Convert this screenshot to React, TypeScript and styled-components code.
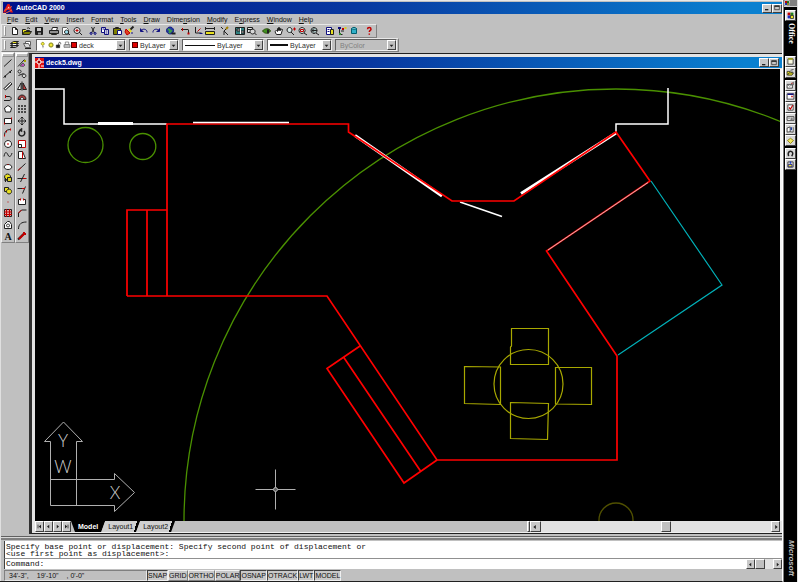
import React from "react";
import styled, { createGlobalStyle, css } from "styled-components";

const GlobalStyle = createGlobalStyle`
  * { box-sizing: border-box; }
  body { margin: 0; background: #c0c0c0; }
  button, select, input, textarea { font: inherit; color: inherit; margin: 0; border-radius: 0; }
`;

const raised = css`
  border: 1px solid;
  border-color: #fff #404040 #404040 #fff;
`;

/* ---------- icons ---------- */

type Mark = [d: string, stroke?: string, fill?: string, width?: number];

const K = "#202020";
const G = "#606060";
const R = "#c00000";
const Y = "#e8e020";
const B = "#101080";
const W = "#ffffff";

const icons: Record<string, Mark[]> = {
  file: [["M3.5 2.5h3l2 2v5h-5z", K, W], ["M6.5 2.5v2h2", K]],
  open: [["M1.5 9.5v-5h3l1 1h3v1", K, Y], ["M1.5 9.5l2-3h7l-2 3z", K, "#808000"], ["M6 3.5c1-1 2-1 3 .5", K]],
  save: [["M2.5 2.5h7v7h-7z", K, K], ["M4 3h4v3H4z", "none", "#c8c8c8"], ["M5 7.5h3v2H5z", "none", "#a0a0a0"]],
  print: [["M4.5 2.5h5l-1 3h-5z", K, W], ["M1.5 5.5h9v3h-9z", K, "#909090"], ["M3.5 8.5h5v1h-5z", K, Y]],
  preview: [["M2.5 2.5h4l2 2v5h-6z", G, W], ["M6.5 5a2 2 0 1 0 .1 0M8 8l2 2", K, "#a0e0f0"]],
  find: [["M5 2.5a3 3 0 1 0 .1 0M7 7l3 3", K, "#e8e8e8"], ["M3.5 5.5h3M5 4v3", R]],
  cut: [["M4.5 2l3 6M7.5 2l-3 6", K], ["M4 7.5a1 1 0 1 0 .1 0M8 7.5a1 1 0 1 0 .1 0", B]],
  copy: [["M2.5 2.5h4v5h-4z", B, W], ["M5.5 4.5h4v5h-4z", B, W], ["M3.5 4h2M6.5 6h2M6.5 8h2", B]],
  paste: [["M2.5 3.5h7v6h-7z", K, "#808000"], ["M4.5 2.5h3v1h-3z", K, Y], ["M6.5 5.5h4v4h-4z", B, W]],
  match: [["M10.5 1.5l-4 4", K, "none", 2], ["M3 4l4 4-3 2-2-3z", R, "#e04020"], ["M6 4l2 3", Y, "none", 2], ["M8 8h2", B]],
  undo: [["M2.500 6c2-3 7-2 6.500 1.500", B], ["M2.500 3.500v3h3", B, B]],
  redo: [["M9.500 6c-2-3-7-2-6.500 1.500", B], ["M9.500 3.500v3h-3", B, B]],
  globe: [["M5 2a3.500 3.500 0 1 0 .1 0", B, "#2040a0"], ["M3 4l3 2-2 2", "#40a040", "none", 2], ["M6.500 8.500h4", K, "none", 2]],
  track: [["M1 4.500h7M8.500 4.500v4", K], ["M7.500 8.500h2", R, R, 2], ["M2.500 3v3", R]],
  ucs: [["M3.500 2v6h6", K], ["M5.500 6.500l3-3", R], ["M7.500 8.500h3", B]],
  dist: [["M1.500 6.500h9v3h-9z", K, Y], ["M1.500 3.500h9M1.500 2v3M10.500 2v3", K]],
  redraw: [["M2 2l2 2M9 2l-4 4v4M5 6l4 4", K], ["M7 4l2-2", "#a08000", "none", 2]],
  aerial: [["M1.500 2.500h9v7h-9z", K, "#308080"], ["M3 4h3v2H3zM7 6h3v2H7z", K, "#d0d0d0"], ["M6.500 3v6", W]],
  views: [["M1.500 2.500h5v5h-5z", K, "#e8e8e8"], ["M6.500 4a2.500 2.500 0 1 0 .1 0M8.500 8l2 2", K, "#d8d8d8"], ["M1.500 4.500h5", K]],
  orbit: [["M1.500 6c2-3 7-3 8 0-2 3-6 3-8 0z", "#305010", "#409020"], ["M7 4.500v4", K, "none", 2]],
  pan: [["M3.500 9.500c-3-4 0-5 1-3V3.500h1v2-3h1v3-2h1v2l1-1.500 1 .500-1.500 5z", K, W]],
  zoomrt: [["M4.500 2.500a2.500 2.500 0 1 0 .1 0M6 7l3 3", K, "#d8e8e8"], ["M8 4h3M9.500 2.500v3", R]],
  zoomwin: [["M5 2.500a3 3 0 1 0 .1 0M7 8l3 2", K, "#d8e8e8"], ["M3.500 4.500h3v2h-3z", R]],
  zoomprev: [["M5 2.500a3 3 0 1 0 .1 0M7 8l3 2", K, "#a8c0c0"], ["M3 5.500h5M5 3.500L3 5.500l2 2", K]],
  props: [["M2.500 2.500h5v7h-5z", B, W], ["M6.500 4.500h3v5h-3z", K, Y], ["M3.500 4.500h2M3.500 6.500h2", B]],
  design: [["M2 2h3v2H2z", "none", B], ["M6 3h2v2H6z", "none", R], ["M8.500 2h2v2h-2z", "none", "#d8d020"], ["M3.500 4v5.500h3M5 6h3", K], ["M3 8h2v2H3z", "none", "#309030"]],
  db: [["M3.500 3.500h5v5h-5z", "#006070", "#30b0c8"], ["M3.500 3.500c1-1.500 4-1.500 5 0-1 1-4 1-5 0", "#006070", "#90e0f0"]],
  help: [["M4.500 4.200c0-2.200 3.500-2.200 3.500 0 0 1.200-1.700 1.200-1.700 2.800M6.300 8.500v1.300", R, "none", 1.5]],
  layers: [["M1.500 4.500l3-2h5l-3 2z", K, Y], ["M1.500 6.500l3-2h5l-3 2z", K, W], ["M1.500 8.500l3-2h5l-3 2z", K, "#b0b0b0"]],
  layerset: [["M4.500 2.500h5v4h-5z", G, W], ["M2.500 4.500h5l2 4h-5z", G, "#d8d8d8"], ["M4 9.500h6", K]],
  bulb: [["M5.500 2a2.200 2.200 0 1 0 .1 0", "#707000", "#f8f040"], ["M5 8h2M5.500 10h1", K]],
  sun: [["M3.500 3.500h5v5h-5z", "#707000", "#f0e830"], ["M6 1.500v2M6 8.500v2M1.500 6h2M8.500 6h2", "#909000"]],
  unlock: [["M2 6h5v4H2z", K, K], ["M5.500 6V3.500c0-2 3-2 3 0V5", K]],
  plot: [["M3.500 1.500h5v4h-5z", G, W], ["M1.500 5.500h9v4h-9z", G, "#c8c8c8"]],
  line: [["M2 9.500L9.500 2.500", K]],
  xline: [["M1.500 9.500L10 2", K], ["M2.500 8.500h1.500M7.500 4h1.500", K, "none", 2]],
  mline: [["M2 8.500L8 2.500l2 1.500-6.500 6z", K, "#909090"], ["M3 9l6-6", W]],
  pline: [["M2 9.500h5c3 0 3-4 0-4H3", K], ["M3.500 4v3", R]],
  polygon: [["M6 2.500l3.500 2.500-1 4h-5l-1-4z", K, W]],
  rect: [["M2.500 3.500h7v5h-7z", K, W], ["M2 8.500h1M9 3.500h1", R, "none", 2]],
  arc: [["M2.500 9.500c0-4 2-6 6-6", K], ["M2 9.500h1M8 3.500h1M4 5.500h1", R, "none", 2]],
  circle: [["M6 2.500a3.500 3.500 0 1 0 .1 0", K, W], ["M5.500 6h1", R, "none", 2]],
  spline: [["M2 7.500c1-6 3-4 4-1.500s3 2 4-2", K]],
  ellipse: [["M6 3.500c5 0 5 5 0 5s-5-5 0-5", K, W], ["M5.500 3.500h1", R]],
  insert: [["M5.500 2a3 3 0 1 0 .1 0", K, Y], ["M5.500 5.500h4v4h-4z", K, "#d8d020"], ["M2 8h3M3.500 6v4", K]],
  block: [["M2.500 3.500h4v4h-4z", K, Y], ["M7 5a2.500 2.500 0 1 0 .1 0", K, Y]],
  point: [["M5.500 6h1", R, "none", 1]],
  hatch: [["M2.500 2.500h7v7h-7z", K, "#e8a0a0"], ["M2 5h8M2 7.500h8M4.500 2v8M7.500 2v8", R]],
  region: [["M2.500 9.500v-4l3-3h2l2 3v4z", K, W], ["M6 5a1.500 1.500 0 1 0 .1 0", K]],
  erase: [["M2 9.500L8.500 2.500", K], ["M4 9l3-3 2 2-1.500 1.500z", G, "#c050c0"], ["M8 4h2", "#a8a000", "none", 2]],
  copyobj: [["M3.500 2a1.500 1.500 0 1 0 .1 0M8 6a1.800 1.800 0 1 0 .1 0M2.500 7.500l5-2", K, "#d8d8d8"]],
  mirror: [["M5 3v6.500H1.500z", K, W], ["M7 3v6.500h3.500z", K, "#d04040"], ["M6 1.500v9", K]],
  offset: [["M2 8.500c0-6 8-6 8 0z", K, "#b04040"], ["M4.500 8.500c0-3 3-3 3 0", K, W]],
  array: [["M2.500 2.500h1v1h-1zM5.500 2.500h1v1h-1zM8.500 2.500h1v1h-1zM2.500 5.500h1v1h-1zM5.500 5.500h1v1h-1zM8.500 5.500h1v1h-1zM2.500 8.500h1v1h-1zM5.500 8.500h1v1h-1zM8.500 8.500h1v1h-1z", K]],
  move: [["M6 2v8M2 6h8M4.500 3.500L6 2l1.500 1.500M4.500 8.500L6 10l1.500-1.500M3.500 4.500L2 6l1.500 1.500M8.500 4.500L10 6 8.500 7.500", K]],
  rotate: [["M6 4a3 3 0 1 0 2 1", K, "none", 1.5], ["M6 2v4l-2.500-2z", K, K, 0.5]],
  scale: [["M2.500 2.500h7v7h-7z", R, W], ["M2.500 6.500h3v3h-3z", K]],
  stretch: [["M2.500 2.500h4l3 7h-7z", K, W], ["M6.500 2.500v7", R]],
  lengthen: [["M2 9.500L9.500 2.500", K], ["M2 9.500l3-3", R]],
  trim: [["M1.500 6.500h9M8.500 2l-4 8", K], ["M7 6.500h3", R]],
  extend: [["M1.500 4.500h6M9.500 2.500l-3 7", K], ["M6 4.500h3", R]],
  brk: [["M4.500 3.500h-2v5h7v-5h-2", K, W], ["M4 3.500h1M7 3.500h1", R, "none", 2]],
  chamfer: [["M2.500 10V6l3-3h5", K], ["M2.500 6l3-3", R]],
  fillet: [["M2.500 10c0-5 3-7 8-7", K]],
  explode: [["M2 9.500L7.500 4", K, "none", 2], ["M3 9l5-5M8 2v2h2", R, "none", 2]],
  shortcut: [["M1 1h10v10H1z", "none", W], ["M2 2h4v4H2z", "none", R], ["M6 2h4v4H6z", "none", "#208020"], ["M2 6h4v4H2z", "none", "#2030c0"], ["M6 6h4v4H6z", K, Y]],
  newdoc: [["M2.500 2.500h7v7h-7z", K, "#f8f8e0"], ["M3 2.500h6", "#a0a000", "none", 2]],
  opendoc: [["M1.500 9.500v-5h4l1 1h3", K, Y], ["M2 9.500l2-3h6l-2 3z", K, Y], ["M6 3l4-1", K]],
  mail: [["M1.500 4.500h7v5h-7z", K, W], ["M2 5l3 2 3-2M7 3.500l3-2v4", G], ["M7 3h2", R]],
  appt: [["M1.500 2.500h9v7h-9z", K, W], ["M2 3h8", B, "none", 2], ["M7 6h2", R, "none", 2]],
  task: [["M2.500 2.500h7v7h-7z", K, W], ["M4 6l2 2 3-5", R, "none", 1.5]],
  contact: [["M1.500 3.500h9v5h-9z", K, W], ["M3 5.500h2M6 5.500h3M6 7h3", K]],
  journal: [["M1.500 4l4-1.500V9l-4 .500zM5.500 9l4 .500V3", K, W], ["M7 3v4", "#2040a0", "none", 2]],
  note: [["M2 6l4-3 4 3-4 4z", "#807000", "#f0e860"]],
  horse: [["M3.500 9.500c-2-6 2-7 4-6s2 4 0 6", K, "none", 2]],
  explore: [["M2.500 2.500h7v7h-7z", K, "#e0e0e0"], ["M3 6h5v3H3z", B, Y], ["M6 2v3", "#2040d0", "none", 2]],
  left: [["M7 3.500v5L4 6z", "none", K]],
  right: [["M5 3.500v5L8 6z", "none", K]],
  first: [["M8 3.500v5L5 6z", "none", K], ["M4 3.500v5", K]],
  last: [["M4 3.500v5L7 6z", "none", K], ["M8 3.500v5", K]],
  down: [["M3.500 5h5L6 8z", "none", K]],
  min: [["M3 8.500h5", K, "none", 2]],
  max: [["M2.500 3.500h7v5h-7z", K], ["M2 3h8", K, "none", 2]],
};

const Svg = styled.svg`
  display: block;
  flex: none;
`;

const Icon = ({ name, size = 12 }: { name: string; size?: number }) => (
  <Svg width={size} height={size} viewBox="0 0 12 12" aria-hidden="true">
    {icons[name].map(([d, stroke = "none", fill = "none", width = 1], i) => (
      <path key={i} d={d} stroke={stroke} fill={fill} strokeWidth={width} />
    ))}
  </Svg>
);

/* ---------- window shell ---------- */

const Screen = styled.div`
  display: flex;
  height: 100vh;
  overflow: hidden;
  background: #000;
  font: 7px/10px "Liberation Sans", Arial, sans-serif;
  color: #101010;
`;

const AppWindow = styled.main`
  flex: 1;
  min-width: 0;
  display: flex;
  flex-direction: column;
  padding: 2px 0 0 1px;
  background: #c0c0c0;
  border-right: 1px solid #fff;
  border-bottom: 1px solid #202020;
  box-shadow: inset 0 1px #e8e8e8, inset 1px 0 #e0e0e0;
`;

const TitleBar = styled.header<{ $doc?: boolean }>`
  display: flex;
  align-items: center;
  gap: 2px;
  flex: none;
  height: ${(p) => (p.$doc ? 11 : 12)}px;
  margin-left: ${(p) => (p.$doc ? 0 : 2)}px;
  padding: 0 ${(p) => (p.$doc ? 3 : 0)}px 0 0;
  background: linear-gradient(90deg, #00108a, #0838a0 45%, #0a80d0 95%);
  color: #fff;
`;

const Title = styled.h1`
  flex: 1;
  margin: 0;
  font-size: 7px;
  font-weight: bold;
`;

const WindowButtons = styled.div`
  display: flex;
`;

const WindowButton = styled.button`
  ${raised}
  display: flex;
  align-items: center;
  justify-content: center;
  width: 10px;
  height: 9px;
  padding: 0;
  background: #c8c8c8;
`;

const MenuBar = styled.nav`
  display: flex;
  flex: none;
  height: 10px;
  padding-left: 3px;
`;

const MenuItem = styled.button`
  border: 0;
  padding: 0 4px 0 3px;
  background: none;
  line-height: 9px;
  white-space: nowrap;
`;

const ToolBar = styled.div`
  display: flex;
  align-items: center;
  align-self: flex-start;
  flex: none;
  gap: 3px;
  height: 14px;
  padding: 0 1px 0 2px;
  border: 1px solid;
  border-color: #e8e8e8 #808080 #808080 #e8e8e8;
`;

const Grip = styled.span<{ $flat?: boolean }>`
  flex: none;
  width: ${(p) => (p.$flat ? "auto" : "2px")};
  height: ${(p) => (p.$flat ? "4px" : "10px")};
  border: 1px solid;
  border-color: #fff #909090 #909090 #fff;
`;

const ToolGroup = styled.div`
  display: flex;
`;

const ToolButton = styled.button`
  display: flex;
  align-items: center;
  justify-content: center;
  width: 12px;
  min-height: 0;
  padding: 0;
  border: 0;
  background: none;
`;

const Combo = styled.label<{ $width: number; $disabled?: boolean }>`
  display: flex;
  align-items: center;
  width: ${(p) => p.$width}px;
  height: 12px;
  padding-left: 2px;
  border: 1px solid;
  border-color: #606060 #f0f0f0 #f0f0f0 #606060;
  background: ${(p) => (p.$disabled ? "#c0c0c0" : "#fff")};
  color: ${(p) => (p.$disabled ? "#808080" : "#303030")};
`;

const ComboSelect = styled.select`
  flex: 1;
  min-width: 0;
  appearance: none;
  padding: 0 0 0 2px;
  border: 0;
  background: none;
  font-size: 7px;
  line-height: 9px;
  opacity: 1;
`;

const ComboArrow = styled.span`
  ${raised}
  display: flex;
  align-items: center;
  justify-content: center;
  width: 9px;
  height: 10px;
  background: #c0c0c0;
`;

const Swatch = styled.span`
  width: 6px;
  height: 6px;
  border: 1px solid #500000;
  background: #e00000;
`;

const LineSample = styled.span<{ $width: number; $weight: number }>`
  width: ${(p) => p.$width}px;
  height: ${(p) => p.$weight}px;
  background: #101010;
`;

const Workspace = styled.div`
  display: flex;
  flex: 1;
  min-height: 0;
`;

const Palettes = styled.div`
  display: flex;
  flex: none;
  align-items: flex-start;
`;

const Palette = styled.div`
  display: flex;
  flex-direction: column;
  width: 14px;
  padding: 0;
  border: 1px solid;
  border-color: #f0f0f0 #808080 #808080 #f0f0f0;
`;

const PaletteGrid = styled.div`
  display: grid;
  grid-auto-rows: 1fr;
  height: 185px;
`;

const LetterTool = styled.b`
  font: bold 10px/11px "Liberation Serif", serif;
`;

const Document = styled.section`
  display: flex;
  flex-direction: column;
  flex: 1;
  min-width: 0;
  margin-top: 1px;
  padding: 3px 0 0 3px;
  border-left: 3px solid;
  border-left-color: #303030;
  border-top: 1px solid #202020;
  border-bottom: 1px solid #202020;
  background: #e4e4e4;
`;

const CanvasRow = styled.div`
  display: flex;
  flex: 1;
  min-height: 0;
  margin-top: 1px;
`;

const Canvas = styled.svg`
  display: block;
  flex: 1;
  min-width: 0;
  height: 100%;
  background: #000;
`;

const VerticalScroll = styled.div`
  width: 2px;
  background: #f4f4f4;
`;

const SheetBar = styled.div`
  display: flex;
  flex: none;
  height: 12px;
  margin-right: 2px;
  border-bottom: 1px solid #f0f0f0;
  background: #c0c0c0;
`;

const SheetButton = styled(WindowButton)<{ $wide?: boolean }>`
  width: ${(p) => (p.$wide ? 11 : 9)}px;
  height: 100%;
`;

const SheetTabs = styled.div`
  display: flex;
  flex: 1;
`;

const SheetTab = styled.button<{ $active?: boolean }>`
  padding: 0 7px;
  border: 0;
  line-height: 10px;
  background: ${(p) =>
    p.$active
      ? "#000"
      : "linear-gradient(108deg, #d0d0d0 0 calc(100% - 6px), #000 calc(100% - 6px))"};
  color: ${(p) => (p.$active ? "#fff" : "#101010")};
  font-weight: ${(p) => (p.$active ? "bold" : "normal")};
  clip-path: ${(p) =>
    p.$active
      ? "polygon(0 0, 100% 0, calc(100% - 4px) 100%, 4px 100%)"
      : "polygon(4px 0, 100% 0, calc(100% - 4px) 100%, 0 100%)"};
  & + & { margin-left: -4px; }
`;

const Splitter = styled.span`
  ${raised}
  width: 3px;
  background: #c0c0c0;
`;

const Track = styled.div<{ $grow: number }>`
  flex: ${(p) => p.$grow};
  min-width: 8px;
  background: #e2e2e2;
`;

const HorizontalScroll = styled.div`
  display: flex;
  width: 34%;
`;

const Thumb = styled.span`
  ${raised}
  width: 10px;
  background: #c0c0c0;
`;

const CommandWindow = styled.section`
  flex: none;
  margin-top: 2px;
  padding: 4px 0 1px 3px;
  border-top: 1px solid #606060;
  box-shadow: inset 0 1px #d8d8d8, inset 0 3px #808080;
  font: 8px/7px "Liberation Mono", "Courier New", monospace;
`;

const CommandHistory = styled.output`
  display: block;
  height: 17px;
  padding: 2px 0 0 1px;
  background: #fff;
  border-left: 1px solid #404040;
  white-space: pre;
  overflow: hidden;
`;

const CommandLine = styled.div`
  display: flex;
  height: 11px;
  border-top: 1px solid #909090;
  border-left: 1px solid #404040;
  background: #fff;
`;

const CommandLabel = styled.label`
  padding-left: 1px;
  line-height: 10px;
`;

const CommandInput = styled.input`
  flex: 1;
  min-width: 0;
  border: 0;
  padding: 0 2px;
  outline: 0;
  background: #fff;
`;

const StatusBar = styled.footer`
  display: flex;
  flex: none;
  height: 11px;
  margin-left: 3px;
`;

const Coordinates = styled.div`
  display: flex;
  gap: 8px;
  width: 143px;
  padding-left: 4px;
  border: 1px solid;
  border-color: #808080 #e8e8e8 #e8e8e8 #808080;
  line-height: 9px;
`;

const StatusToggle = styled.button<{ $on?: boolean }>`
  padding: 0;
  border: 1px solid;
  border-color: ${(p) => (p.$on ? "#404040 #f0f0f0 #f0f0f0 #404040" : "#f0f0f0 #808080 #808080 #f0f0f0")};
  background: #c8c8c8;
  line-height: 9px;
`;

/* ---------- office shortcut bar ---------- */

const OfficeBar = styled.aside`
  display: flex;
  flex: none;
  flex-direction: column;
  align-items: center;
  width: 15px;
  padding-bottom: 6px;
  border-left: 1px solid #808080;
  border-right: 1px solid #e0e0e0;
  background: #000;
`;

const OfficeCap = styled.div`
  align-self: stretch;
  display: flex;
  height: 7px;
  margin-bottom: 3px;
  background: #808080;
  border-bottom: 1px solid #d0d0d0;
`;

const OfficeButton = styled.button<{ $gap?: boolean }>`
  ${raised}
  display: flex;
  flex: none;
  align-items: center;
  justify-content: center;
  width: 11px;
  height: 11px;
  margin-top: ${(p) => (p.$gap ? 2 : 0)}px;
  padding: 0;
  background: #d8d8d8;
`;

const OfficeName = styled.span<{ $brand?: boolean }>`
  writing-mode: vertical-rl;
  margin-top: ${(p) => (p.$brand ? "auto" : "2px")};
  height: ${(p) => (p.$brand ? "auto" : "33px")};
  color: ${(p) => (p.$brand ? "#c0c0c0" : "#fff")};
  font: ${(p) =>
    p.$brand
      ? 'italic bold 8px/10px "Liberation Sans", Arial, sans-serif'
      : 'bold 8px/10px "Liberation Serif", serif'};
`;

/* ---------- data ---------- */

/* Each label is split round its access key. */
const menus: [string, string, string][] = [
  ["", "F", "ile"],
  ["", "E", "dit"],
  ["", "V", "iew"],
  ["", "I", "nsert"],
  ["F", "o", "rmat"],
  ["", "T", "ools"],
  ["", "D", "raw"],
  ["Dime", "n", "sion"],
  ["", "M", "odify"],
  ["E", "x", "press"],
  ["", "W", "indow"],
  ["", "H", "elp"],
];

const toolGroups = [
  ["file", "open", "save"],
  ["print", "preview", "find"],
  ["cut", "copy", "paste", "match"],
  ["undo", "redo"],
  ["globe"],
  ["track", "ucs", "dist"],
  ["redraw"],
  ["aerial", "views"],
  ["orbit", "pan", "zoomrt", "zoomwin", "zoomprev"],
  ["props", "design", "db"],
  ["help"],
];

const drawTools = ["line", "xline", "mline", "pline", "polygon", "rect", "arc", "circle", "spline", "ellipse", "insert", "block", "point", "hatch", "region"];
const modifyTools = ["erase", "copyobj", "mirror", "offset", "array", "move", "rotate", "scale", "stretch", "lengthen", "trim", "extend", "brk", "chamfer", "fillet", "explode"];

const officeTools: [string, boolean][] = [
  ["newdoc", false],
  ["opendoc", false],
  ["mail", true],
  ["appt", false],
  ["task", false],
  ["contact", false],
  ["journal", false],
  ["note", false],
  ["horse", true],
  ["explore", false],
];

const toggles: [string, boolean][] = [
  ["SNAP", true],
  ["GRID", false],
  ["ORTHO", false],
  ["POLAR", false],
  ["OSNAP", true],
  ["OTRACK", true],
  ["LWT", true],
  ["MODEL", true],
];

const AppLogo = () => (
  <Svg width="11" height="11" viewBox="0 0 11 11" aria-hidden="true">
    <path d="M0 9.500L4.500 1h2L10 9.500H7.500L6.500 7H4L2.500 9.500z" fill="#e01818" />
    <path d="M4.500 5.500l1-2 1 2z" fill="#fff" />
    <path d="M1 7.500l8-4M3 10l6-3" stroke="#f06040" fill="none" />
    <path d="M0 10.500h3" stroke="#f0c0a0" />
  </Svg>
);

const DrawingLogo = () => (
  <Svg width="9" height="10" viewBox="0 0 9 10" aria-hidden="true">
    <path d="M0 0h9v10H0z" fill="#e01010" />
    <circle cx="4" cy="4" r="2" stroke="#fff" fill="#a00000" />
    <path d="M4 0v2M4 6v4M0 4h2M6 4h3M6 8h3" stroke="#fff" />
  </Svg>
);

const Drawing = () => (
  <Canvas role="img" aria-label="Deck plan">
    <g transform="translate(-35 -69)" fill="none" strokeWidth="1.500">
      <g stroke="#4a9000" strokeWidth="1.300">
        <circle cx="616" cy="521" r="432" />
        <circle cx="85.500" cy="145" r="17.500" />
        <circle cx="142.800" cy="146.500" r="13" />
        <circle cx="616" cy="520" r="17" stroke="#505000" />
      </g>
      <g stroke="#fff">
        <path d="M35 89H64V124H167M616 132V124H668V88" />
        <path d="M98 123.500H133" strokeWidth="3" />
        <path d="M355 135.500L442 196M521 193.500L616 133" strokeWidth="3" />
        <path d="M460 202L502 216.500" />
      </g>
      <path
        stroke="#f00"
        strokeWidth="1.700"
        d="M127 296H327L437 460H617V356L546.500 251L650 181L616 132L514 201H452L348.500 132V124H167V296M167 210H127V296M147 210V296M360 346L327 368.500L404 483L437 460M343.500 357L420.500 471"
      />
      <path d="M193 122.500H289" stroke="#fff" />
      <path d="M548 250L648 182.500" stroke="#d0b8b8" strokeWidth="1" />
      <path d="M651 181L722 285L618 355" stroke="#00b0b8" strokeWidth="1.200" />
      <g stroke="#a8a800" strokeWidth="1.200">
        <path d="M511.500 328.500H548.500V364.500H510.500V347L511.500 346zM464.500 366.500L500.500 367V404.500L464.500 403.500zM555.500 367.500H591.500V404.500L555.500 404zM510.500 402.500L548.500 403.500L547.500 439.500L510.500 438.500z" />
        <circle cx="528.500" cy="384" r="34.500" />
      </g>
      <g stroke="#b0b0b0" strokeWidth="1">
        <path d="M50.500 505.500V441.500H44.500L63.500 422L82.500 441.500H76.500V505.500M50.500 479.500H114.500V473.500L134.500 492.500L114.500 511.500V505.500H50.500" />
        <path d="M275.500 469.500V509.500M255.500 489.500H295.500" />
        <circle cx="275.500" cy="489.500" r="2" fill="#606060" />
      </g>
      <g fill="#d0d0d0" fontFamily="Lato, sans-serif" fontWeight="300" fontSize="17" textAnchor="middle">
        <text x="63" y="447">Y</text>
        <text x="63" y="473">W</text>
        <text x="115" y="499">X</text>
      </g>
    </g>
  </Canvas>
);

type ComboBoxProps = { label: string; value: string; width: number; disabled?: boolean; children?: React.ReactNode };

const ComboBox = ({ label, value, width, disabled, children }: ComboBoxProps) => (
  <Combo $width={width} $disabled={disabled}>
    {children}
    <ComboSelect aria-label={label} disabled={disabled} defaultValue={value}>
      <option>{value}</option>
    </ComboSelect>
    <ComboArrow>
      <Icon name="down" size={9} />
    </ComboArrow>
  </Combo>
);

const Tool = ({ name }: { name: string }) => (
  <ToolButton type="button" aria-label={name}>
    <Icon name={name} />
  </ToolButton>
);

const Controls = () => (
  <WindowButtons>
    <WindowButton type="button" aria-label="Minimize"><Icon name="min" size={8} /></WindowButton>
    <WindowButton type="button" aria-label="Maximize"><Icon name="max" size={8} /></WindowButton>
  </WindowButtons>
);

export default function App() {
  return (
    <>
      <GlobalStyle />
      <Screen>
        <AppWindow>
          <TitleBar>
            <AppLogo />
            <Title>AutoCAD 2000</Title>
            <Controls />
          </TitleBar>
          <MenuBar>
            {menus.map(([before, key, after]) => (
              <MenuItem key={before + key + after} type="button">{before}<u>{key}</u>{after}</MenuItem>
            ))}
          </MenuBar>
          <ToolBar>
            <Grip />
            {toolGroups.map((group) => (
              <ToolGroup key={group[0]}>
                {group.map((name) => <Tool key={name} name={name} />)}
              </ToolGroup>
            ))}
          </ToolBar>
          <ToolBar>
            <Grip />
            <ToolGroup>
              <Tool name="layers" />
              <Tool name="layerset" />
            </ToolGroup>
            <ComboBox label="Layer" value="deck" width={90}>
              <Icon name="bulb" size={8} />
              <Icon name="sun" size={8} />
              <Icon name="unlock" size={8} />
              <Icon name="plot" size={8} />
              <Swatch />
            </ComboBox>
            <ComboBox label="Color" value="ByLayer" width={50}>
              <Swatch />
            </ComboBox>
            <ComboBox label="Linetype" value="ByLayer" width={82}>
              <LineSample $width={30} $weight={1} />
            </ComboBox>
            <ComboBox label="Lineweight" value="ByLayer" width={65}>
              <LineSample $width={18} $weight={2} />
            </ComboBox>
            <ComboBox label="Plot style" value="ByColor" width={62} disabled />
          </ToolBar>
          <Workspace>
            <Palettes>
              <Palette>
                <Grip $flat />
                <PaletteGrid>
                  {drawTools.map((name) => <Tool key={name} name={name} />)}
                  <ToolButton type="button" aria-label="Text"><LetterTool>A</LetterTool></ToolButton>
                </PaletteGrid>
              </Palette>
              <Palette>
                <Grip $flat />
                <PaletteGrid>
                  {modifyTools.map((name) => <Tool key={name} name={name} />)}
                </PaletteGrid>
              </Palette>
            </Palettes>
            <Document>
              <TitleBar $doc>
                <DrawingLogo />
                <Title as="h2">deck5.dwg</Title>
                <Controls />
              </TitleBar>
              <CanvasRow>
                <Drawing />
                <VerticalScroll />
              </CanvasRow>
              <SheetBar>
                {["first", "left", "right", "last"].map((name) => (
                  <SheetButton key={name} type="button" aria-label={name}>
                    <Icon name={name} size={9} />
                  </SheetButton>
                ))}
                <SheetTabs>
                  <SheetTab type="button" $active>Model</SheetTab>
                  <SheetTab type="button">Layout1</SheetTab>
                  <SheetTab type="button">Layout2</SheetTab>
                </SheetTabs>
                <HorizontalScroll>
                  <Splitter />
                  <SheetButton $wide type="button" aria-label="Scroll left"><Icon name="left" size={10} /></SheetButton>
                  <Track $grow={12} />
                  <Thumb />
                  <Track $grow={10} />
                  <SheetButton type="button" aria-label="Scroll right"><Icon name="right" size={10} /></SheetButton>
                </HorizontalScroll>
              </SheetBar>
            </Document>
          </Workspace>
          <CommandWindow>
            <CommandHistory>
              {"Specify base point or displacement: Specify second point of displacement or\n<use first point as displacement>:"}
            </CommandHistory>
            <CommandLine>
              <CommandLabel htmlFor="command">Command:</CommandLabel>
              <CommandInput id="command" />
              <SheetButton type="button" aria-label="Scroll command left"><Icon name="left" size={9} /></SheetButton>
              <Thumb />
              <Track $grow={0} />
              <SheetButton type="button" aria-label="Scroll command right"><Icon name="right" size={9} /></SheetButton>
            </CommandLine>
          </CommandWindow>
          <StatusBar>
            <Coordinates>
              <span>34'-3",</span>
              <span>19'-10"</span>
              <span>, 0'-0"</span>
            </Coordinates>
            {toggles.map(([name, on]) => (
              <StatusToggle key={name} type="button" $on={on}>{name}</StatusToggle>
            ))}
          </StatusBar>
        </AppWindow>
        <OfficeBar>
          <OfficeCap><Icon name="shortcut" size={6} /></OfficeCap>
          <OfficeButton type="button" aria-label="Office"><Icon name="shortcut" size={9} /></OfficeButton>
          <OfficeName>Office</OfficeName>
          {officeTools.map(([name, gap]) => (
            <OfficeButton key={name} type="button" aria-label={name} $gap={gap}>
              <Icon name={name} size={9} />
            </OfficeButton>
          ))}
          <OfficeName $brand>Microsoft</OfficeName>
        </OfficeBar>
      </Screen>
    </>
  );
}
